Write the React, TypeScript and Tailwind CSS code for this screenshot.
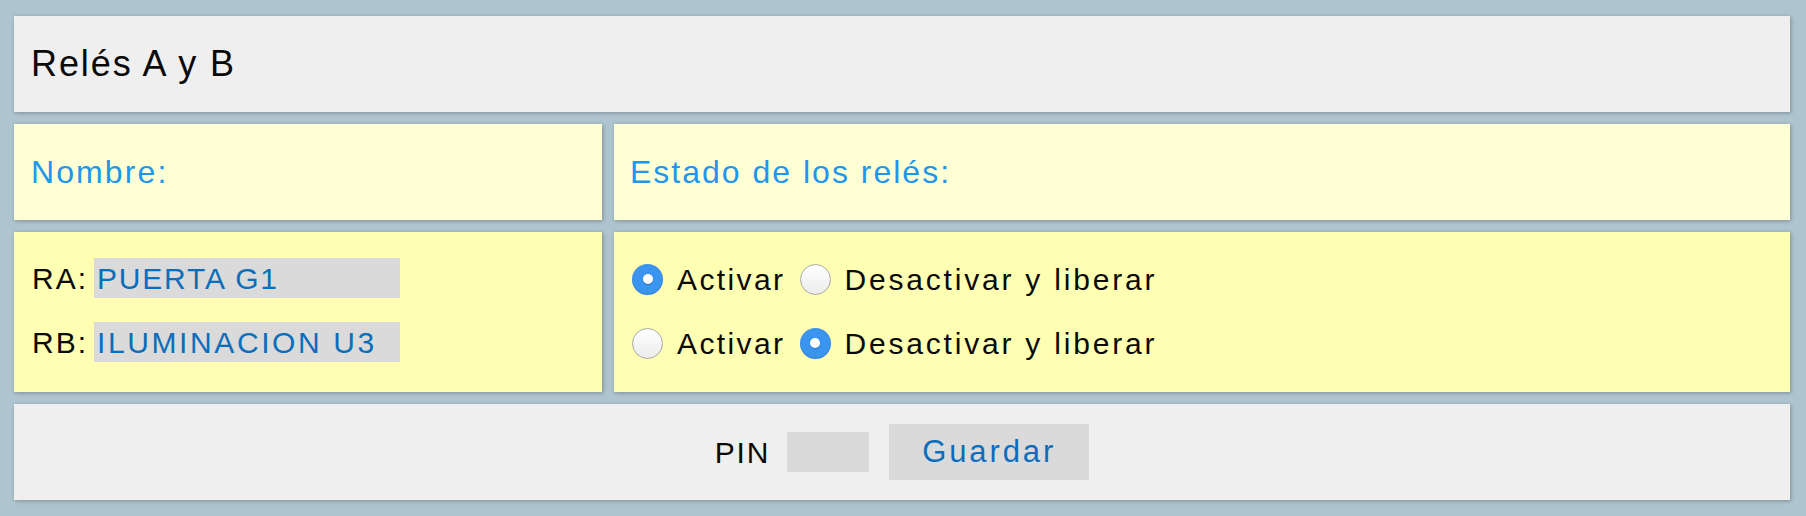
import { useState } from 'react'

// Circular radio drawn with spans so it matches the blue/white look
function Radio({ checked, onClick }: { checked: boolean; onClick: () => void }) {
  return checked ? (
    <span
      onClick={onClick}
      className="flex h-[31px] w-[31px] shrink-0 items-center justify-center rounded-full bg-[#3b94ef] shadow-[inset_0_-1px_2px_rgba(0,0,0,0.15)]"
    >
      <span className="h-[10px] w-[10px] rounded-full bg-white shadow-[0_1px_1px_rgba(0,0,0,0.2)]" />
    </span>
  ) : (
    <span
      onClick={onClick}
      className="h-[31px] w-[31px] shrink-0 rounded-full border border-[#a9a9a9] bg-gradient-to-b from-white to-[#ececec]"
    />
  )
}

function RelayRow({
  active,
  onChange,
}: {
  active: boolean
  onChange: (v: boolean) => void
}) {
  return (
    <div className="flex h-10 items-center">
      <Radio checked={active} onClick={() => onChange(true)} />
      <span className="ml-[14px] mr-[14px]">Activar</span>
      <Radio checked={!active} onClick={() => onChange(false)} />
      <span className="ml-[14px] tracking-[2.8px]">Desactivar y liberar</span>
    </div>
  )
}

export default function App() {
  const [ra, setRa] = useState(true)
  const [rb, setRb] = useState(false)

  const panel = 'shadow-[1px_1px_4px_rgba(0,0,0,0.28)]'

  return (
    <div className="flex min-h-screen flex-col gap-3 bg-[#aec4cf] pb-4 pl-[14px] pr-4 pt-4 font-['Liberation_Sans',Arial,sans-serif] text-[#0a0a0a]">
      {/* Title */}
      <div className={`flex h-24 items-center bg-[#efefef] px-[17px] text-[36px] tracking-[1.9px] ${panel}`}>
        Relés A y B
      </div>

      <div className="grid grid-cols-[1fr_2fr] gap-3">
        {/* Headings */}
        <div className={`flex h-24 items-center bg-[#ffffd6] px-[17px] text-[32px] tracking-[2.1px] text-[#2196ee] ${panel}`}>
          Nombre:
        </div>
        <div className={`flex h-24 items-center bg-[#ffffd6] px-[16px] text-[32px] tracking-[2px] text-[#2196ee] ${panel}`}>
          Estado de los relés:
        </div>

        {/* Names */}
        <div className={`flex h-[160px] flex-col gap-6 bg-[#ffffb4] px-[18px] pt-[26px] text-[30px] tracking-[2px] ${panel}`}>
          <label className="flex h-10 items-center">
            <span className="mr-[6px]">RA:</span>
            <input
              type="text"
              defaultValue="PUERTA G1"
              className="h-10 w-[306px] bg-[#dadada] pl-[3px] tracking-[1.8px] text-[#0a6ebd] outline-none"
            />
          </label>
          <label className="flex h-10 items-center">
            <span className="mr-[6px]">RB:</span>
            <input
              type="text"
              defaultValue="ILUMINACION U3"
              className="h-10 w-[306px] bg-[#dadada] pl-[3px] tracking-[2.6px] text-[#0a6ebd] outline-none"
            />
          </label>
        </div>

        {/* Relay states */}
        <div className={`flex h-[160px] flex-col gap-6 bg-[#ffffb4] px-[18px] pt-[27px] text-[30px] tracking-[2.4px] ${panel}`}>
          <RelayRow active={ra} onChange={setRa} />
          <RelayRow active={rb} onChange={setRb} />
        </div>
      </div>

      {/* PIN + save */}
      <div className={`flex h-24 items-center justify-center bg-[#efefef] text-[30px] tracking-[1.8px] ${panel}`}>
        <span>PIN</span>
        <input
          type="password"
          className="ml-[17px] h-10 w-[82px] bg-[#dadada] outline-none"
        />
        <button className="ml-5 h-14 w-[200px] bg-[#dadada] text-[31px] tracking-[2.9px] text-[#0a6ebd]">
          Guardar
        </button>
      </div>
    </div>
  )
}
